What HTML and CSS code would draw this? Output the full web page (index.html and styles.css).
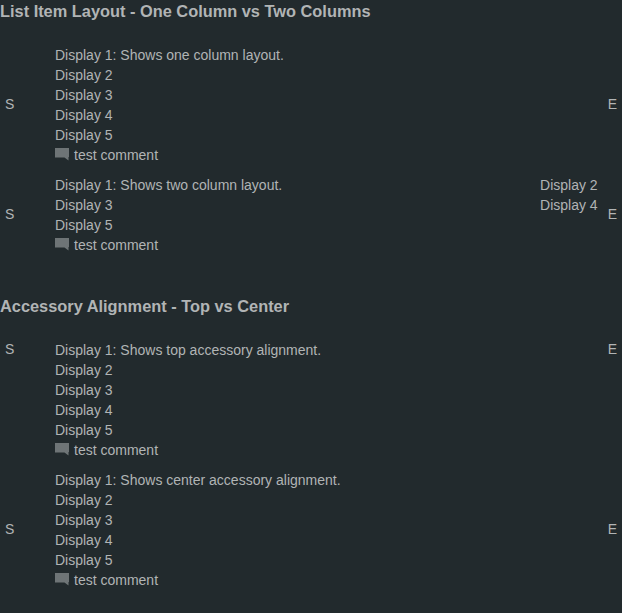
FILE: index.html
```html
<!DOCTYPE html>
<html lang="en">
<head>
<meta charset="utf-8">
<title>List Item Layouts</title>
<link rel="stylesheet" href="styles.css">
</head>
<body>
<svg class="sprite" aria-hidden="true"><symbol id="comment" viewBox="0 0 14 13"><path d="M0 0H14V9H13.5V12.5L9.5 9.5H0Z"/></symbol></svg>
<main>
<section class="group">
<h3>List Item Layout - One Column vs Two Columns</h3>
<ul class="list">
<li class="item">
<span class="accessory start">S</span>
<div class="column"><p>Display 1: Shows one column layout.</p><p>Display 2</p><p>Display 3</p><p>Display 4</p><p>Display 5</p><p class="comment"><svg class="icon" aria-hidden="true"><use href="#comment"/></svg>test comment</p></div>
<span class="accessory">E</span>
</li>
<li class="item">
<span class="accessory start">S</span>
<div class="column"><p>Display 1: Shows two column layout.</p><p>Display 3</p><p>Display 5</p><p class="comment"><svg class="icon" aria-hidden="true"><use href="#comment"/></svg>test comment</p></div>
<div class="secondary"><p>Display 2</p><p>Display 4</p></div>
<span class="accessory">E</span>
</li>
</ul>
</section>
<section class="group">
<h3>Accessory Alignment - Top vs Center</h3>
<ul class="list">
<li class="item top">
<span class="accessory start">S</span>
<div class="column"><p>Display 1: Shows top accessory alignment.</p><p>Display 2</p><p>Display 3</p><p>Display 4</p><p>Display 5</p><p class="comment"><svg class="icon" aria-hidden="true"><use href="#comment"/></svg>test comment</p></div>
<span class="accessory">E</span>
</li>
<li class="item">
<span class="accessory start">S</span>
<div class="column"><p>Display 1: Shows center accessory alignment.</p><p>Display 2</p><p>Display 3</p><p>Display 4</p><p>Display 5</p><p class="comment"><svg class="icon" aria-hidden="true"><use href="#comment"/></svg>test comment</p></div>
<span class="accessory">E</span>
</li>
</ul>
</section>
</main>
</body>
</html>
```
FILE: styles.css
```css
* {
  box-sizing: border-box;
}

body {
  margin: 0;
  background: #222a2d;
  color: #b1b4b5;
  font: 14px/20px "Liberation Sans", Arial, sans-serif;
}

.sprite {
  display: none;
}

h3 {
  margin: 0 0 18px;
  line-height: 22px;
}

.group {
  padding-bottom: 35px;
}

.list {
  margin: 0;
  padding: 0;
  list-style: none;
}

.item {
  display: flex;
  align-items: center;
  padding: 5px 0;
}

.item.top {
  align-items: flex-start;
}

.item p {
  margin: 0;
}

.accessory {
  padding: 0 5px 2px;
  line-height: 18px;
}

.start {
  width: 55px;
}

.column {
  flex: 1;
}

.secondary {
  align-self: flex-start;
  padding-right: 5px;
}

.comment {
  display: flex;
  gap: 5px;
}

.icon {
  width: 14px;
  height: 13px;
  margin-top: 3px;
  fill: #6e7476;
}
```
